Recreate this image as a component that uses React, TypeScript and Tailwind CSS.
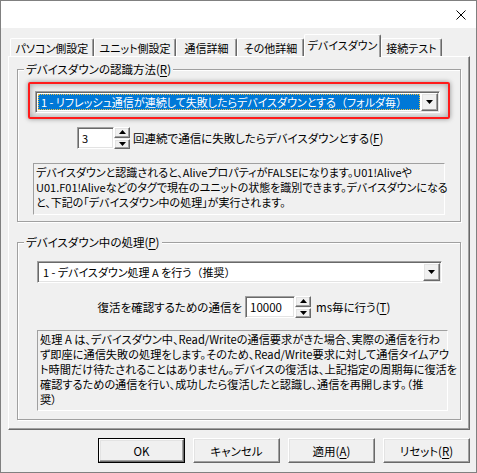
const ui = "font-['Noto_Sans_CJK_JP',sans-serif] [font-feature-settings:'palt'] text-[11px] text-black"

const raised =
    "bg-[#f0f0f0] border border-t-white border-l-white border-r-[#696969] border-b-[#696969] shadow-[inset_-1px_-1px_0_#a0a0a0,inset_1px_1px_0_#e3e3e3]"

const sunken =
    "bg-white border border-t-[#a0a0a0] border-l-[#a0a0a0] border-r-white border-b-white shadow-[inset_1px_1px_0_#696969,inset_-1px_-1px_0_#e3e3e3]"

const tabs = [
    { label: "パソコン側設定", w: "w-[84px]" },
    { label: "ユニット側設定", w: "w-[82px]" },
    { label: "通信詳細", w: "w-[61px]" },
    { label: "その他詳細", w: "w-[67px]" },
    { label: "デバイスダウン", w: "w-[77px]", active: true },
    { label: "接続テスト", w: "w-[61px]" },
]

function Key({ k }: { k: string }) {
    return (
        <>
            (<span className="underline decoration-1 underline-offset-[2px]">{k}</span>)
        </>
    )
}

// full-width brackets keep their em width (palt would squeeze them)
function Wide({ children }: { children: string }) {
    return <span className="[font-feature-settings:normal]">{children}</span>
}

function Arrow({ up }: { up?: boolean }) {
    return (
        <svg width="7" height="4" viewBox="0 0 7 4">
            <path d={up ? "M0 4h7L3.5 0z" : "M0 0h7L3.5 4z"} fill="#000" />
        </svg>
    )
}

function Combo({ children, selected }: { children: React.ReactNode; selected?: boolean }) {
    return (
        <div className={`${sunken} flex w-[405px] h-[22px] p-[1px]`}>
            <div className="flex-1 flex p-[1px] min-w-0">
                {selected ? (
                    <div className="flex-1 bg-[#0078d7] outline-1 outline-dotted outline-[#f0c040] -outline-offset-1 flex items-center pl-[3px] text-white whitespace-nowrap overflow-hidden leading-[16px]">
                        {children}
                    </div>
                ) : (
                    <div className="flex-1 flex items-center pl-[3px] whitespace-nowrap overflow-hidden leading-[16px]">{children}</div>
                )}
            </div>
            <div className={`${raised} w-[17px] flex items-center justify-center`}>
                <Arrow />
            </div>
        </div>
    )
}

function Spin() {
    return (
        <div className="flex flex-col gap-[1px] w-[16px] h-[22px]">
            <div className={`${raised} flex-1 flex items-center justify-center`}>
                <Arrow up />
            </div>
            <div className={`${raised} flex-1 flex items-center justify-center`}>
                <Arrow />
            </div>
        </div>
    )
}

function Group({ label, h, children }: { label: React.ReactNode; h: string; children: React.ReactNode }) {
    return (
        <div className={`relative ml-[8px] w-[444px] ${h} border border-[#a0a0a0] shadow-[1px_1px_0_#fff,inset_1px_1px_0_#fff]`}>
            <span className="absolute left-[6px] top-[-9px] px-[2px] bg-[#f0f0f0] leading-[16px] whitespace-nowrap text-[11.5px]">
                {label}
            </span>
            {children}
        </div>
    )
}

function Note({ lines, className }: { lines: string[]; className: string }) {
    return (
        <div className={`${className} border border-t-[#a0a0a0] border-l-[#a0a0a0] border-r-white border-b-white px-[2px] pt-[1px] leading-[15px]`}>
            {lines.map((line) => (
                <div key={line} className="whitespace-nowrap">
                    {line}
                </div>
            ))}
        </div>
    )
}

export default function App() {
    return (
        <div className={`${ui} w-[477px] h-[473px] border border-[#808080] bg-[#f0f0f0] flex flex-col overflow-hidden`}>
            {/* Title bar */}
            <div className="h-[27px] bg-white flex items-center justify-end pr-[10px]">
                <svg width="10" height="10" viewBox="0 0 10 10">
                    <path d="M0.5 0.5L9.5 9.5M9.5 0.5L0.5 9.5" stroke="#000" strokeWidth="1" />
                </svg>
            </div>

            <div className="flex-1 pt-[6px] pl-[7px]">
                {/* Tabs */}
                <div className="flex items-end h-[22px] ml-[2px]">
                    {tabs.map((tab) =>
                        tab.active ? (
                            <div
                                key={tab.label}
                                className={`${tab.w} relative z-10 -mb-px h-[23px] bg-[#f0f0f0] border border-b-0 border-t-white border-l-white border-r-[#696969] shadow-[inset_-1px_0_0_#a0a0a0] rounded-t-[2px] flex justify-center pt-[2px] leading-[16px] whitespace-nowrap`}
                            >
                                {tab.label}
                            </div>
                        ) : (
                            <div
                                key={tab.label}
                                className={`${tab.w} h-[18px] border border-b-0 border-t-white border-l-white border-r-[#696969] shadow-[inset_-1px_0_0_#a0a0a0] rounded-t-[2px] flex items-center justify-center leading-[16px] whitespace-nowrap`}
                            >
                                {tab.label}
                            </div>
                        ),
                    )}
                </div>

                {/* Tab page */}
                <div className="w-[462px] h-[374px] border border-t-white border-l-white border-r-[#696969] border-b-[#696969] shadow-[inset_-1px_-1px_0_#a0a0a0] pt-[12px]">
                    <Group label={<>デバイスダウンの認識方法<Key k="R" /></>} h="h-[153px]">
                        <div className="ml-[10px] mt-[12px] w-[422px] h-[37px] border-2 border-[#ff1a1a] rounded-[2px] shadow-[0_0_5px_rgba(0,0,0,0.4),inset_0_0_7px_rgba(0,0,0,0.35)] pl-[5px] pt-[7px]">
                            <Combo selected>
                                1 - リフレッシュ通信が連続して失敗したらデバイスダウンとする<Wide>（</Wide>フォルダ毎<Wide>）</Wide>
                            </Combo>
                        </div>
                        <div className="flex items-center ml-[59px] mt-[8px] h-[22px]">
                            <div className={`${sunken} w-[37px] h-[22px] flex items-center pl-[4px] leading-[16px]`}>3</div>
                            <Spin />
                            <span className="ml-[3px] whitespace-nowrap leading-[16px] text-[11.5px]">
                                回連続で通信に失敗したらデバイスダウンとする<Key k="F" />
                            </span>
                        </div>
                        <Note
                            className="ml-[15px] mt-[14px] w-[412px] h-[52px]"
                            lines={[
                                "デバイスダウンと認識されると、AliveプロパティがFALSEになります。U01!Aliveや",
                                "U01.F01!Aliveなどのタグで現在のユニットの状態を識別できます。デバイスダウンになる",
                                "と、下記の「デバイスダウン中の処理」が実行されます。",
                            ]}
                        />
                    </Group>

                    <div className="mt-[20px]">
                        <Group label={<>デバイスダウン中の処理<Key k="P" /></>} h="h-[178px]">
                            <div className="ml-[19px] mt-[18px]">
                                <Combo>
                                    1 - デバイスダウン処理 A を行う<Wide>（</Wide>推奨<Wide>）</Wide>
                                </Combo>
                            </div>
                            <div className="flex items-center mt-[13px] h-[22px] text-[11.5px]">
                                <span className="w-[227px] text-right pr-[3px] whitespace-nowrap leading-[16px]">
                                    復活を確認するための通信を
                                </span>
                                <div className={`${sunken} w-[50px] h-[22px] flex items-center pl-[4px] leading-[16px]`}>10000</div>
                                <Spin />
                                <span className="ml-[5px] whitespace-nowrap leading-[16px]">
                                    ms毎に行う<Key k="T" />
                                </span>
                            </div>
                            <Note
                                className="ml-[19px] mt-[12px] w-[411px] h-[81px] text-[11.2px]"
                                lines={[
                                    "処理 A は、デバイスダウン中、Read/Writeの通信要求がきた場合、実際の通信を行わ",
                                    "ず即座に通信失敗の処理をします。そのため、Read/Write要求に対して通信タイムアウ",
                                    "ト時間だけ待たされることはありません。デバイスの復活は、上記指定の周期毎に復活を",
                                    "確認するための通信を行い、成功したら復活したと認識し、通信を再開します。（推",
                                    "奨）",
                                ]}
                            />
                        </Group>
                    </div>
                </div>

                {/* Buttons */}
                <div className="flex justify-end gap-2 pr-[6px] mt-[8px] text-[11.5px]">
                    <div className="w-[87px] h-[25px] border border-black flex">
                        <div className={`${raised} flex-1 flex items-center justify-center leading-[16px]`}>OK</div>
                    </div>
                    <div className={`${raised} w-[87px] h-[25px] flex items-center justify-center leading-[16px]`}>キャンセル</div>
                    <div className={`${raised} w-[87px] h-[25px] flex items-center justify-center leading-[16px]`}>
                        適用<Key k="A" />
                    </div>
                    <div className={`${raised} w-[87px] h-[25px] flex items-center justify-center leading-[16px]`}>
                        リセット<Key k="R" />
                    </div>
                </div>
            </div>
        </div>
    )
}
